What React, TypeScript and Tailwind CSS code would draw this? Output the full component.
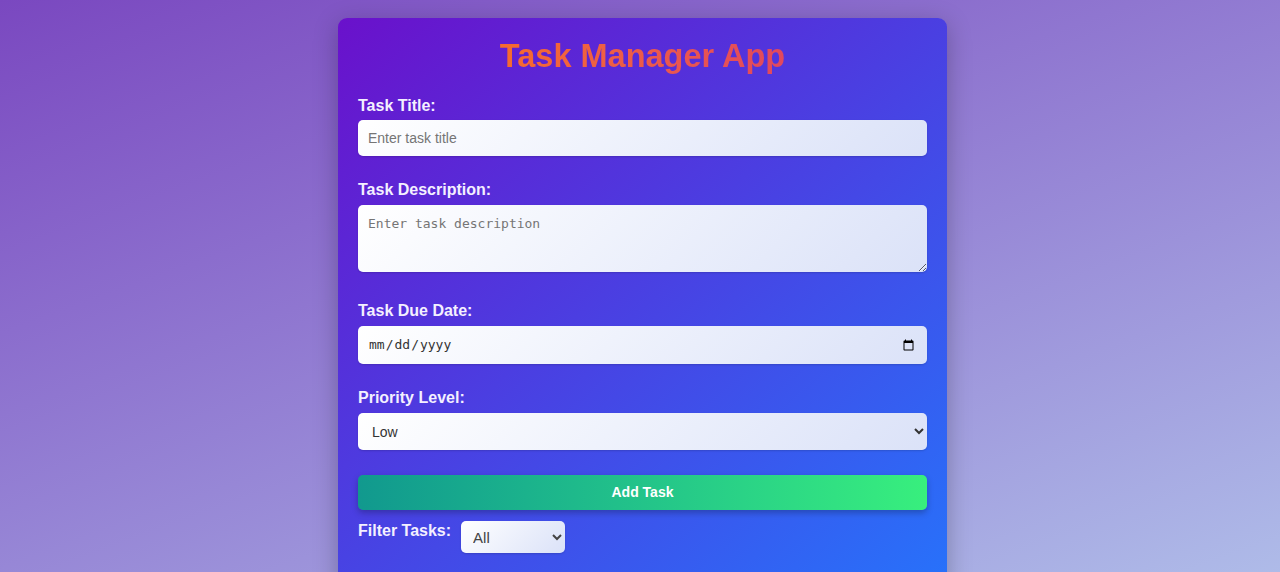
import { useState } from 'react';

const field =
	'w-full rounded-[5px] bg-linear-135 from-white to-[#dbe2f8] px-[10px] text-[#333] outline-none shadow-[0_1px_2px_rgba(0,0,0,0.15)]';

const labelCls = 'block text-[16px] leading-[18px] font-bold text-[#f4f0ff]';

export default function App() {
	const [title, setTitle] = useState('');
	const [desc, setDesc] = useState('');
	const [date, setDate] = useState('');
	const [priority, setPriority] = useState('Low');
	const [filter, setFilter] = useState('All');

	return (
		<div className="min-h-[572px] bg-linear-[160deg] from-[#7a48c0] to-[#b1c0ea] pt-[18px] pl-[5px] font-['Liberation_Sans',Arial,sans-serif]">
			<div className="mx-auto w-[609px] min-h-[600px] rounded-[9px] bg-linear-[140deg] from-[#6a11cb] to-[#2575fc] px-5 pt-5 pb-6 shadow-[0_6px_24px_rgba(0,0,0,0.25)]">
				<h1 className="mb-[22px] text-center text-[32.5px] leading-[37px] font-bold">
					<span className="bg-linear-to-r from-[#f66b2c] to-[#e1485e] bg-clip-text text-transparent">
						Task Manager App
					</span>
				</h1>

				<label className={`${labelCls} mb-[5px]`}>Task Title:</label>
				<input
					type="text"
					value={title}
					onChange={(e) => setTitle(e.target.value)}
					placeholder="Enter task title"
					className={`${field} h-9 text-[14px] placeholder:text-[#757575]`}
				/>

				<label className={`${labelCls} mt-[25px] mb-[6px]`}>Task Description:</label>
				<textarea
					value={desc}
					onChange={(e) => setDesc(e.target.value)}
					placeholder="Enter task description"
					className={`${field} block h-[67px] py-[9px] font-['DejaVu_Sans_Mono',monospace] text-[13px] placeholder:text-[#757575]`}
				/>

				<label className={`${labelCls} mt-[30px] mb-[6px]`}>Task Due Date:</label>
				<input
					type="date"
					value={date}
					onChange={(e) => setDate(e.target.value)}
					className={`${field} h-[38px] font-['DejaVu_Sans_Mono',monospace] text-[13px] text-[#222]`}
				/>

				<label className={`${labelCls} mt-[25px] mb-[6px]`}>Priority Level:</label>
				<select
					value={priority}
					onChange={(e) => setPriority(e.target.value)}
					className={`${field} h-[37px] text-[14px]`}
				>
					<option>Low</option>
					<option>Medium</option>
					<option>High</option>
				</select>

				<button className="mt-[25px] h-[35px] w-full rounded-[5px] bg-linear-to-r from-[#11998e] to-[#38ef7d] text-[14px] font-bold text-white shadow-[0_3px_6px_rgba(0,0,0,0.25)]">
					Add Task
				</button>

				<div className="mt-[11px] flex items-start gap-[10px]">
					<label className={`${labelCls} pt-[1px]`}>Filter Tasks:</label>
					<select
						value={filter}
						onChange={(e) => setFilter(e.target.value)}
						className="h-8 w-[104px] rounded-[5px] bg-linear-135 from-white to-[#dbe2f8] px-2 text-[15px] text-[#444] outline-none shadow-[0_1px_2px_rgba(0,0,0,0.15)]"
					>
						<option>All</option>
						<option>Low</option>
						<option>Medium</option>
						<option>High</option>
					</select>
				</div>

				<ul className="mt-5"></ul>
			</div>
		</div>
	);
}
